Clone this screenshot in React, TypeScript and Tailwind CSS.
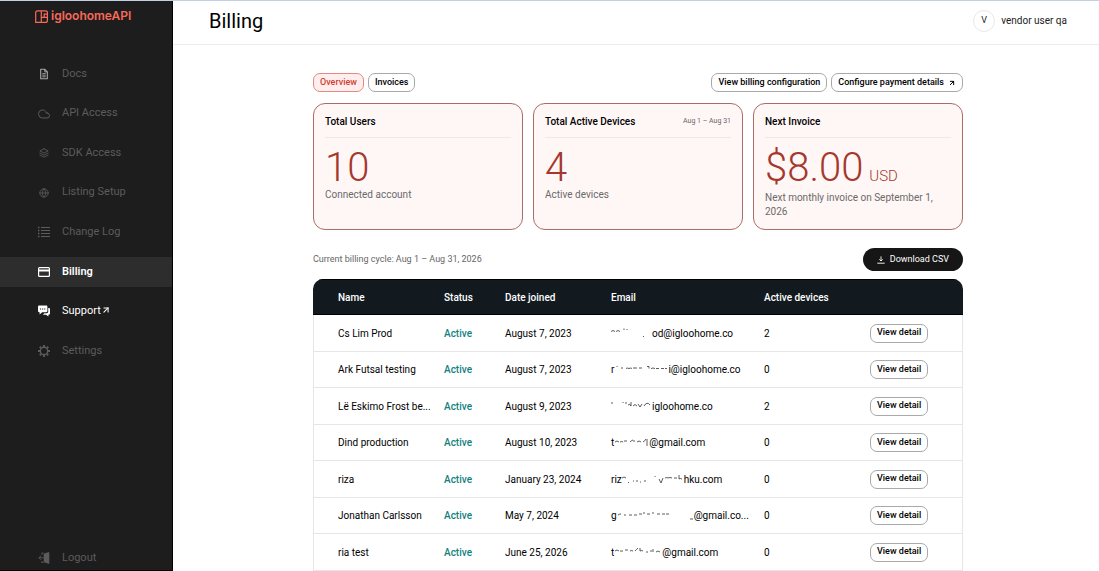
import type { ReactNode } from "react";
import { FiCloud, FiGlobe, FiLayers } from "react-icons/fi";
import { ArrowUpRight } from "lucide-react";
import { clsx } from "clsx";

type NavItem = {
  label: string;
  icon: ReactNode;
  state?: "active" | "enabled";
  external?: boolean;
};

const DocIcon = () => (
  <svg className="w-3 h-3 text-[#a8a8a8]" viewBox="0 0 12 12" fill="none" stroke="currentColor">
    <path d="M2.7 1.3h4.2l2.4 2.5v6.900H2.7z" strokeWidth="1.1" strokeLinejoin="round" />
    <path d="M6.7 1.3v2.6h2.6M4.3 5.6h3.4M4.3 7.2h3.4M4.3 8.8h3.4" strokeWidth="0.9" />
  </svg>
);

const ListIcon = () => (
  <svg className="w-3 h-3" viewBox="0 0 12 12" fill="none" stroke="currentColor">
    <path d="M3 1.5h9M3 4.5h9M3 7.5h9M3 10.5h9" strokeWidth="1" />
    <path d="M0 1.5h1.5M0 4.5h1.5M0 7.5h1.5M0 10.5h1.5" strokeWidth="1.3" />
  </svg>
);

const CardIcon = () => (
  <svg className="w-3 h-3" viewBox="0 0 12 12" fill="none" stroke="currentColor">
    <rect x="0.6" y="1.6" width="10.8" height="8.8" rx="0.9" strokeWidth="1.2" />
    <path d="M0.6 4.5h10.8" strokeWidth="2" />
  </svg>
);

const ChatIcon = () => (
  <svg className="w-3 h-3" viewBox="0 0 12 12" fill="currentColor">
    <path d="M1.2 .6h7c.7 0 1.2.5 1.2 1.200v4.300c0 .7-.5 1.200-1.200 1.200H4.200L1.600 9.400V7.300h-.4C.5 7.300 0 6.800 0 6.100V1.800C0 1.100.5.6 1.200.6z" />
    <path d="M10.200 3h.6c.7 0 1.200.5 1.200 1.200v4.300c0 .7-.5 1.200-1.200 1.200h-.4v1.800L8 9.700H4.800l1.600-1.500h2.400c.8 0 1.400-.6 1.400-1.400z" />
    <path d="M2 4h1.100M4.100 4h1.100M6.200 4h1.100" stroke="#1d1d1d" strokeWidth="1" />
  </svg>
);

const GearIcon = () => (
  <svg className="w-3 h-3" viewBox="0 0 12 12" fill="none" stroke="currentColor">
    <circle cx="6" cy="6" r="3.700" strokeWidth="1.400" />
    <path
      d="M6 0v2M6 10v2M0 6h2M10 6h2M1.760 1.760l1.400 1.400M8.840 8.840l1.400 1.400M1.760 10.240l1.400-1.400M8.840 3.160l1.400-1.400"
      strokeWidth="1.900"
    />
  </svg>
);

const LogoutIcon = () => (
  <svg className="w-3 h-3" viewBox="0 0 12 12" fill="none" stroke="currentColor">
    <path d="M6 1.800 11 .4v11.200L6 10z" fill="currentColor" strokeWidth="0.600" />
    <path d="M5.500 5.800H1M3 3.800 1 5.800l2 2M5.500 1H3.800v1.600M3.800 9v1.500h1.700" strokeWidth="0.900" />
  </svg>
);

const LogoMark = () => (
  <svg className="w-[13px] h-[13px]" viewBox="0 0 13 13" fill="none" stroke="currentColor" strokeWidth="1.200">
    <path d="M2.600.8h7.800c1.200 0 2 .8 2 1.800v7.800c0 1.200-.8 2-2 2H6.300V.8M6.300 12.400H.7V2.800C.7 1.500 1.400.8 2.600.8" />
    <path d="M12.200 4.200H9.200v2.900M6.300 7.400h6" />
  </svg>
);

const DownloadIcon = () => (
  <svg className="w-2 h-2" viewBox="0 0 8 8" fill="none" stroke="currentColor" strokeWidth="0.900">
    <path d="M4 .4v4.400M2.300 3.300 4 5l1.700-1.700M.3 7.200h7.400" />
  </svg>
);

const navItems: NavItem[] = [
  { label: "Docs", icon: <DocIcon /> },
  { label: "API Access", icon: <FiCloud className="w-3 h-3" /> },
  { label: "SDK Access", icon: <FiLayers className="w-[10px] h-[10px]" /> },
  { label: "Listing Setup", icon: <FiGlobe className="w-[10px] h-[10px]" /> },
  { label: "Change Log", icon: <ListIcon /> },
  { label: "Billing", icon: <CardIcon />, state: "active" },
  { label: "Support", icon: <ChatIcon />, state: "enabled", external: true },
  { label: "Settings", icon: <GearIcon /> },
];

// Part of each address is masked: `marks` is what is left of it, on a 12px high strip.
type Masked = { start: string; width: number; marks: string; end: string };

type Account = {
  name: string;
  joined: string;
  email: Masked;
  devices: number;
};

const accounts: Account[] = [
  {
    name: "Cs Lim Prod",
    joined: "August 7, 2023",
    email: {
      start: "",
      width: 41,
      marks: "M0 4.500q2-2 4 0M5 4.500q2-2 4 0M13 1.500v1.500M16 2v1M32 10l1-1",
      end: "od@igloohome.co",
    },
    devices: 2,
  },
  {
    name: "Ark Futsal testing",
    joined: "August 7, 2023",
    email: {
      start: "r",
      width: 54,
      marks: "M3 3v-1M7 4h2M12 4.500q1-1 3 0q2-1 3 0M19 4h4M25 4h3M33 2.500h2v2M37 4.500q2-1 4 0M42 4.500h3M47 4.500h3M51 4.500h2",
      end: "i@igloohome.co",
    },
    devices: 0,
  },
  {
    name: "Lë Eskimo Frost be...",
    joined: "August 9, 2023",
    email: {
      start: "",
      width: 41,
      marks: "M1 2v2M12 2v1M15 2v2M20 2v4M17 5q2-2 3 1M22 6q2-3 4 0M27 4l2 3 2-3M33 6q3-5 6-1",
      end: "igloohome.co",
    },
    devices: 2,
  },
  {
    name: "Dind production",
    joined: "August 10, 2023",
    email: {
      start: "t",
      width: 35,
      marks: "M1 5q2-2 4 0M6 5q2-1 3 0M10 4h3M16 5q2-2 3-2M20 3v2M23 5q2-2 4 0M29 5q2-1 3-3M33 2v7",
      end: "@gmail.com",
    },
    devices: 0,
  },
  {
    name: "riza",
    joined: "January 23, 2024",
    email: {
      start: "riz",
      width: 62,
      marks: "M0 5q2-2 4 0M6 10l1-1M11 8h1M14 8h2M18 9h1M22 8h2M33 3v1M37 6l2 4M41 5l-2 5M43 5q2-1 3 0q2-1 4 0M52 5h3M57 2v4q1-1 3 0",
      end: "hku.com",
    },
    devices: 0,
  },
  {
    name: "Jonathan Carlsson",
    joined: "May 7, 2024",
    email: {
      start: "g",
      width: 77,
      marks: "M1 5q1-1 3-1M7 5h2M12 5h3M17 5h3M22 4h3M27 2v2M30 4h3M35 3h2M40 4h3M45 4h3M49 4h3M76 9h-3",
      end: "@gmail.co...",
    },
    devices: 0,
  },
  {
    name: "ria test",
    joined: "June 25, 2026",
    email: {
      start: "t",
      width: 48,
      marks: "M1 5q2-2 4 0M6 5h3M11 4h3M16 5q1-1 3 0M21 5q1-1 3-3M26 2v3q2-1 3 0M33 5v2M36 5h2M39 3v3M42 6q2-2 4 0",
      end: "@gmail.com",
    },
    devices: 0,
  },
];

const Sidebar = () => (
  <aside className="w-[173px] shrink-0 flex flex-col bg-[#1d1d1d] border-r border-b border-black">
    <a href="#" className="flex items-center gap-[3px] pl-[35px] pt-[6px] h-6 text-[#f9695a] font-[Inter,sans-serif]">
      <LogoMark />
      <span className="text-xs font-semibold">igloohomeAPI</span>
    </a>
    <nav className="mt-[34px] grow flex flex-col">
      <ul className="h-[307px] flex flex-col justify-between">
        {navItems.map((item) => (
          <li key={item.label}>
            <a
              href="#"
              className={clsx(
                "flex items-center h-[30px] pl-[38px] gap-3 text-[11px]",
                item.state === "active" && "bg-[#2d2d2d] text-white font-semibold",
                item.state === "enabled" && "text-white",
                !item.state && "text-[#5c5c5c]"
              )}
            >
              <span className="w-3 flex justify-center">{item.icon}</span>
              <span className="flex items-start">
                {item.label}
                {item.external && <ArrowUpRight className="w-[10px] h-[10px] mt-[2px]" strokeWidth={2.5} />}
              </span>
            </a>
          </li>
        ))}
      </ul>
      <button type="button" className="mt-auto flex items-center h-6 pl-[38px] gap-3 text-[11px] text-[#5c5c5c]">
        <LogoutIcon />
        Logout
      </button>
    </nav>
  </aside>
);

const PillButton = ({ children, selected }: { children: ReactNode; selected?: boolean }) => (
  <button
    type="button"
    className={clsx(
      "h-[19px] px-[6px] flex items-center gap-1 rounded-[7px] border text-[9px] font-medium whitespace-nowrap",
      selected ? "bg-[#ffeeed] border-[#e58a82] text-[#d0402f]" : "bg-white border-[#a9a9a9] text-black"
    )}
  >
    {children}
  </button>
);

type StatCardProps = {
  title: string;
  range?: string;
  value: string;
  unit?: string;
  caption: string;
};

const StatCard = ({ title, range, value, unit, caption }: StatCardProps) => (
  <section className="min-h-[127px] px-[11px] pt-[7px] pb-2 rounded-xl border border-[#ab6b66] bg-[#fff7f6]">
    <div className="flex items-center justify-between h-[27px] pb-[6px] border-b border-[#e9ebeb]">
      <h2 className="text-[10px] font-medium text-black">{title}</h2>
      {range && <span className="text-[7px] text-[#666666]">{range}</span>}
    </div>
    <p className="mt-[10px] flex items-baseline gap-[6px] h-10 leading-10 font-light text-[#a5382d]">
      <span className="text-[40px]">{value}</span>
      {unit && <span className="text-[15px]">{unit}</span>}
    </p>
    <p className={clsx("text-[10px] leading-[14px] text-[#6a6a6a]", unit && "mt-[3px]")}>{caption}</p>
  </section>
);

const EmailCell = ({ email }: { email: Masked }) => (
  <span className="flex items-center whitespace-nowrap">
    {email.start}
    <svg width={email.width} height="12" className="shrink-0" fill="none" stroke="#333333" strokeWidth="0.800">
      <path d={email.marks} />
    </svg>
    {email.end}
  </span>
);

const AccountsTable = () => (
  <div className="mt-2 rounded-t-[10px] overflow-hidden">
    <table className="w-full table-fixed border-separate border-spacing-0 text-left text-[10px] text-black">
      <colgroup>
        <col className="w-[131px]" />
        <col className="w-[61px]" />
        <col className="w-[106px]" />
        <col className="w-[153px]" />
        <col className="w-[106px]" />
        <col />
      </colgroup>
      <thead>
        <tr className="h-9 bg-[#131a1f] text-white *:font-medium *:border-y *:border-black">
          <th className="pl-[25px]">Name</th>
          <th>Status</th>
          <th>Date joined</th>
          <th>Email</th>
          <th>Active devices</th>
          <th aria-label="Actions" />
        </tr>
      </thead>
      <tbody>
        {accounts.map((account) => (
          <tr key={account.name} className="odd:h-[37px] even:h-9 *:border-b *:border-[#e6e6e6]">
            <td className="pl-6 border-l whitespace-nowrap">{account.name}</td>
            <td className="font-medium text-[#11807e]">Active</td>
            <td>{account.joined}</td>
            <td>
              <EmailCell email={account.email} />
            </td>
            <td>{account.devices}</td>
            <td className="border-r">
              <PillButton>View detail</PillButton>
            </td>
          </tr>
        ))}
      </tbody>
    </table>
  </div>
);

export default function App() {
  return (
    <div className="min-h-screen flex bg-white border-t border-[#c3cfe2] font-[Roboto,sans-serif]">
      <Sidebar />
      <div className="grow min-w-0 flex flex-col">
        <header className="h-11 pl-9 pr-8 flex items-center justify-between border-b border-[#ececec]">
          <h1 className="pb-1 text-xl text-black">Billing</h1>
          <div className="flex items-center gap-[6px] pb-1 text-[10px] text-[#222222]">
            <span className="w-[22px] h-[22px] rounded-full border border-[#e8e8e8] flex items-center justify-center text-[9px]">
              V
            </span>
            vendor user qa
          </div>
        </header>

        <main className="w-full max-w-[654px] mx-auto pl-1 pt-7">
          <div className="flex items-center justify-between">
            <div className="flex gap-1">
              <PillButton selected>Overview</PillButton>
              <PillButton>Invoices</PillButton>
            </div>
            <div className="flex gap-1">
              <PillButton>View billing configuration</PillButton>
              <PillButton>
                Configure payment details
                <ArrowUpRight className="w-2 h-2" strokeWidth={3} />
              </PillButton>
            </div>
          </div>

          <div className="mt-[11px] grid grid-cols-3 gap-[10px]">
            <StatCard title="Total Users" value="10" caption="Connected account" />
            <StatCard title="Total Active Devices" range="Aug 1 – Aug 31" value="4" caption="Active devices" />
            <StatCard
              title="Next Invoice"
              value="$8.00"
              unit="USD"
              caption="Next monthly invoice on September 1, 2026"
            />
          </div>

          <div className="mt-[18px] flex items-center justify-between">
            <p className="text-[9px] text-[#666666]">Current billing cycle: Aug 1 – Aug 31, 2026</p>
            <button
              type="button"
              className="h-[23px] px-[14px] flex items-center gap-[5px] rounded-full bg-[#161616] text-white text-[9px]"
            >
              <DownloadIcon />
              Download CSV
            </button>
          </div>

          <AccountsTable />
        </main>
      </div>
    </div>
  );
}
